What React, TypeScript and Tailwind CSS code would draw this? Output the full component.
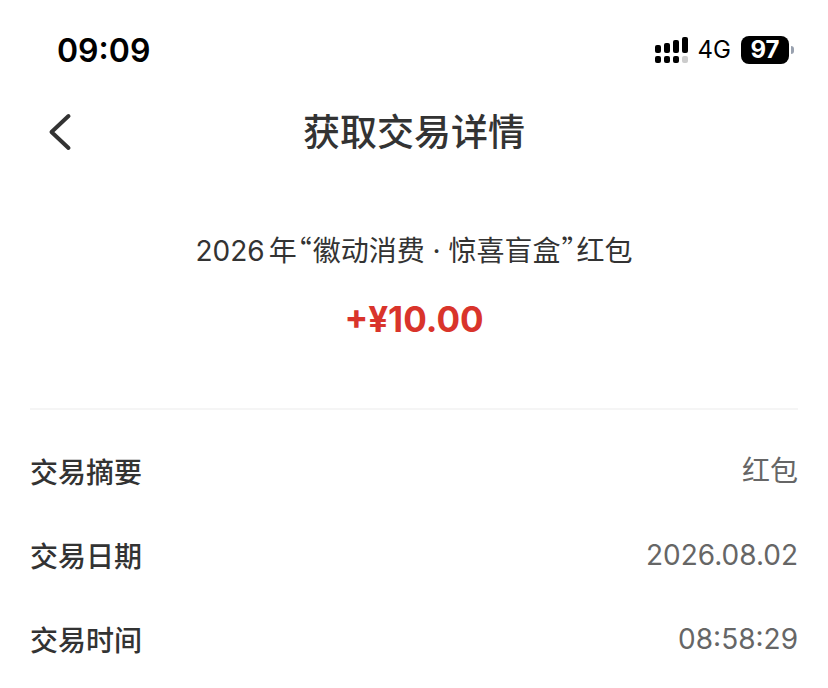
import type { ReactNode } from "react";

const rows = [
  { label: "交易摘要", value: "红包" },
  { label: "交易日期", value: "2026.08.02" },
  { label: "交易时间", value: "08:58:29" },
];

function StatusBar() {
  return (
    <div className="flex h-16 items-end justify-between pr-[34px] pl-[57px] text-black">
      <span className="text-[32px] leading-[26px] font-semibold">09:09</span>
      <div className="flex h-7 items-center gap-2.5">
        <svg width="33" height="26" viewBox="0 0 33 26" fill="currentColor" aria-hidden="true">
          <rect x="0" y="8" width="6" height="8" rx="2" />
          <rect x="9" y="6" width="6" height="10" rx="2" />
          <rect x="18" y="3" width="6" height="13" rx="2" />
          <rect x="27" y="0" width="6" height="16" rx="2" />
          <rect x="0" y="19" width="6" height="7" rx="2" />
          <rect x="9" y="19" width="6" height="7" rx="2" />
          <rect x="18" y="19" width="6" height="7" rx="2" />
          <rect x="27" y="19" width="6" height="7" rx="2" fill="#ccc" />
        </svg>
        <span className="text-2xl leading-7">4G</span>
        <div className="flex items-center gap-0.5">
          <span className="flex h-7 w-12 items-center justify-center rounded-lg bg-black text-2xl font-bold text-white">97</span>
          <span className="h-2 w-[3px] rounded-r-full bg-gray-400" />
        </div>
      </div>
    </div>
  );
}

function Header({ children }: { children: ReactNode }) {
  return (
    <header className="grid h-[136px] grid-cols-[64px_1fr_64px] items-center px-7">
      <button type="button" aria-label="返回" className="flex h-16 items-center justify-center">
        <svg width="24" height="38" viewBox="0 0 24 38" fill="none" stroke="#333" strokeWidth="4" aria-hidden="true">
          <path d="M20.5 3 3.5 19l17 16" strokeLinecap="round" strokeLinejoin="round" />
        </svg>
      </button>
      <h1 className="pt-0.5 text-center text-[37px] leading-[52px] font-medium">{children}</h1>
    </header>
  );
}

// half-width form of the CJK quotation marks
function Quote({ children }: { children: ReactNode }) {
  return <span className="mx-px font-['Noto_Sans_CJK_SC',sans-serif] [font-feature-settings:'halt']">{children}</span>;
}

export default function App() {
  return (
    <div className="min-h-screen bg-white font-['Inter','Noto_Sans_CJK_SC',sans-serif] text-[#333]">
      <StatusBar />
      <Header>获取交易详情</Header>
      <main className="px-[30px]">
        <section className="flex flex-col items-center gap-[26px] border-b-2 border-[#f5f5f5] pt-[29px] pb-[67px]">
          <p className="text-[28px] leading-10">
            <span className="mr-1">2026</span>年<Quote>“</Quote>徽动消费 · 惊喜盲盒<Quote>”</Quote>红包
          </p>
          <p className="text-[35px] leading-11 font-bold text-[#d9342b]">+¥10.00</p>
        </section>
        <dl className="flex flex-col gap-10 pt-[39px]">
          {rows.map((row) => (
            <div key={row.label} className="flex items-center justify-between text-[28px] leading-10">
              <dt className="pt-1 font-medium">{row.label}</dt>
              <dd className="text-[#666]">{row.value}</dd>
            </div>
          ))}
        </dl>
      </main>
    </div>
  );
}
